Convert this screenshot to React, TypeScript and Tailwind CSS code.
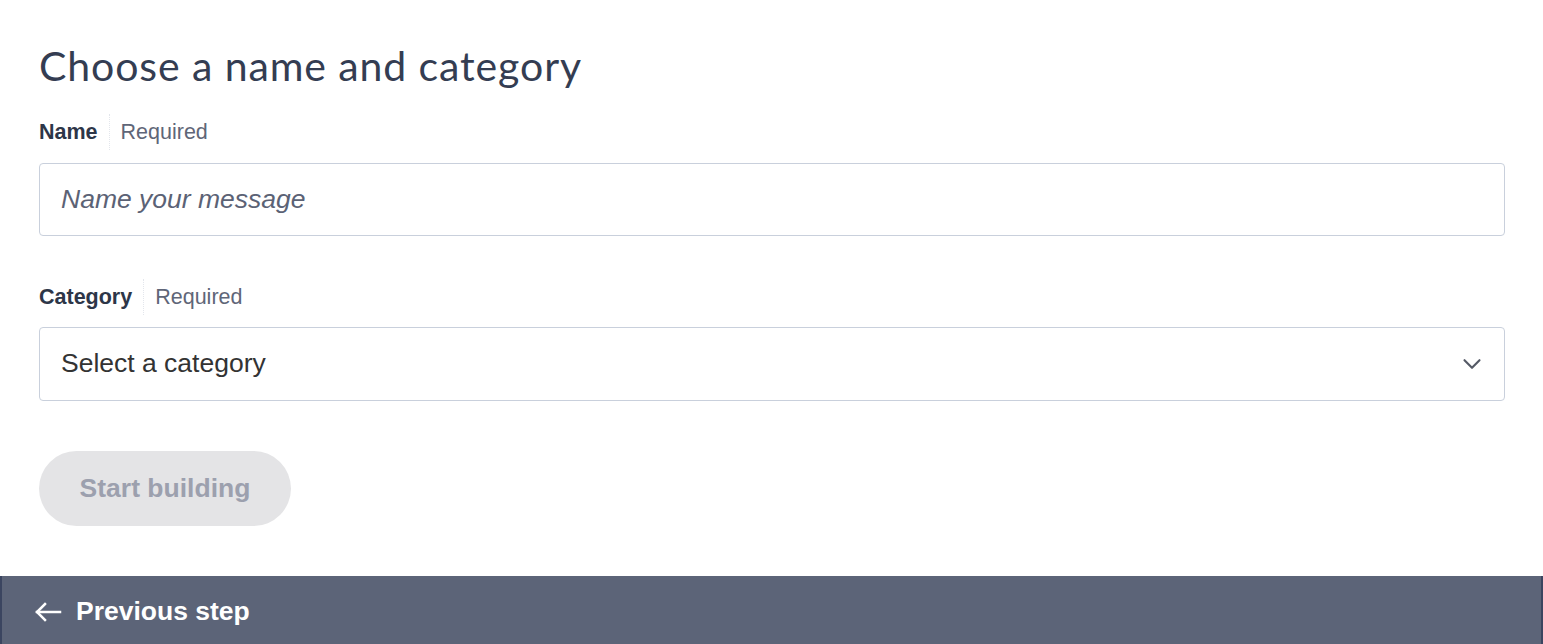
import { ChevronDown } from "lucide-react";

function FieldLabel({ label }: { label: string }) {
  return (
    <div className="flex items-center h-[36px] text-[21.5px] font-['Liberation_Sans',Arial,sans-serif]">
      <span className="font-bold text-[#2d3648] pr-[11px]">{label}</span>
      <span className="h-full border-l border-dotted border-[#e3e6ec]" />
      <span className="text-[#5f6678] pl-[11px]">Required</span>
    </div>
  );
}

export default function App() {
  return (
    <div className="w-[1543px] h-[644px] bg-white flex flex-col overflow-hidden">
      <div className="flex-1 px-[39px] pt-[40px] pr-[38px]">
        <h1 className="text-[41px] leading-[52px] text-[#343d52] font-['Lato',sans-serif] tracking-[0.9px]">
          Choose a name and category
        </h1>

        <div className="mt-[22px]">
          <FieldLabel label="Name" />
        </div>
        <div className="mt-[13px] h-[73px] border border-[#c9d0dc] rounded-[4px] flex items-center px-[21px]">
          <span className="italic text-[26.5px] text-[#5b6275] font-['Liberation_Sans',Arial,sans-serif]">
            Name your message
          </span>
        </div>

        <div className="mt-[43px]">
          <FieldLabel label="Category" />
        </div>
        <div className="mt-[12px] h-[74px] border border-[#c9d0dc] rounded-[4px] flex items-center justify-between pl-[21px] pr-[17px]">
          <span className="text-[26.5px] text-[#333333] font-['Liberation_Sans',Arial,sans-serif]">
            Select a category
          </span>
          <ChevronDown size={30} strokeWidth={1.7} className="text-[#555a66]" />
        </div>

        <button className="mt-[50px] h-[75px] w-[252px] rounded-full bg-[#e4e4e6] text-[26.5px] font-bold text-[#9ca0ae] font-['Liberation_Sans',Arial,sans-serif]">
          Start building
        </button>
      </div>

      <div className="h-[68px] bg-[#5c6478] border-x-2 border-[#3b4560] flex items-center pl-[32px] pt-[4px] gap-[14px] text-white font-['Liberation_Sans',Arial,sans-serif]">
        <svg width="28" height="20" viewBox="0 0 28 20" fill="none" stroke="white" strokeWidth="2.5" strokeLinecap="square">
          <path d="M3 10H26" />
          <path d="M11 2L3 10L11 18" />
        </svg>
        <span className="text-[26.5px] font-bold">Previous step</span>
      </div>
    </div>
  );
}
